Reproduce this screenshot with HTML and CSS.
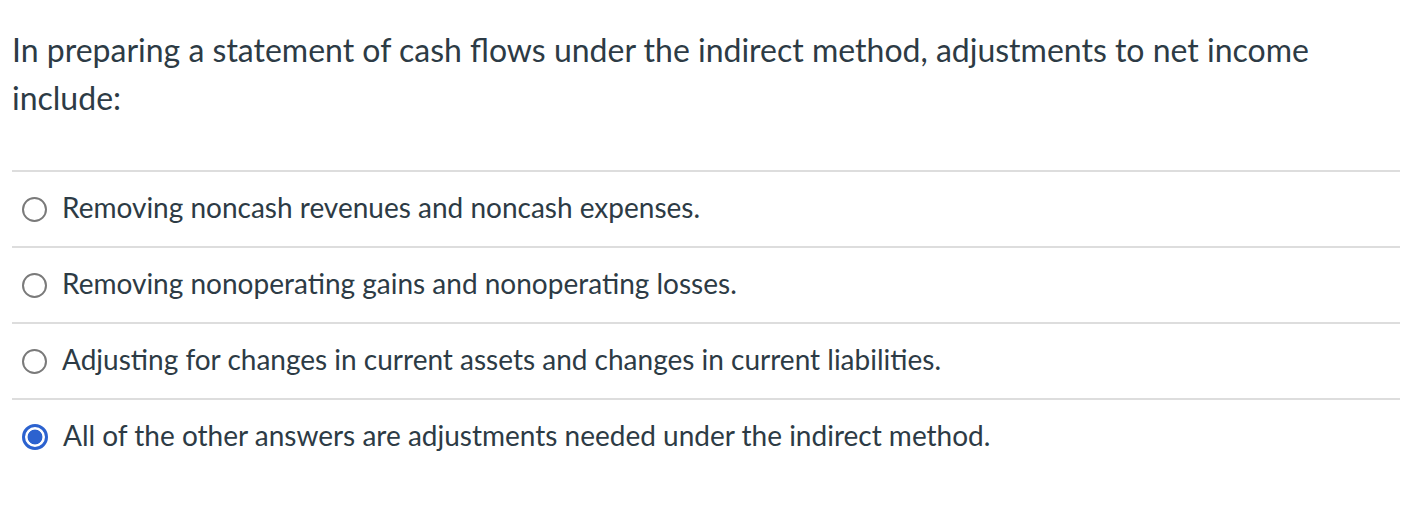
FILE: index.html
```html
<!DOCTYPE html>
<html>
<head>
<meta charset="utf-8">
<link rel="stylesheet" href="styles.css">
</head>
<body>
<div class="question">
  <p class="prompt">In preparing a statement of cash flows under the indirect method, adjustments to net income include:</p>
  <div class="answers">
    <label class="answer"><span class="radio"></span><span class="text">Removing noncash revenues and noncash expenses.</span></label>
    <label class="answer"><span class="radio"></span><span class="text">Removing nonoperating gains and nonoperating losses.</span></label>
    <label class="answer"><span class="radio"></span><span class="text">Adjusting for changes in current assets and changes in current liabilities.</span></label>
    <label class="answer"><span class="radio checked"></span><span class="text">All of the other answers are adjustments needed under the indirect method.</span></label>
  </div>
</div>
</body>
</html>
```
FILE: styles.css
```css
html, body { margin: 0; padding: 0; background: #fff; }
body { font-family: Lato, "Open Sans", sans-serif; color: #2d3b45; }
.question { padding: 26px 6px 0 12px; }
.prompt { margin: 0; font-size: 32px; line-height: 48px; width: 1330px; }
.answers { margin-top: 48px; }
.answer { display: flex; align-items: center; gap: 15px; height: 74px; border-top: 2px solid #dddddd; padding-left: 10px; font-size: 28px; }
.text { margin-bottom: 4px; }
.radio { width: 21px; height: 21px; border: 2px solid #7a7a7a; border-radius: 50%; flex: none; box-sizing: content-box; }
.radio.checked { border: 3px solid #2c62cf; width: 20px; height: 20px; background: radial-gradient(circle, #2c62cf 0 7px, #fff 7.8px); }
```
